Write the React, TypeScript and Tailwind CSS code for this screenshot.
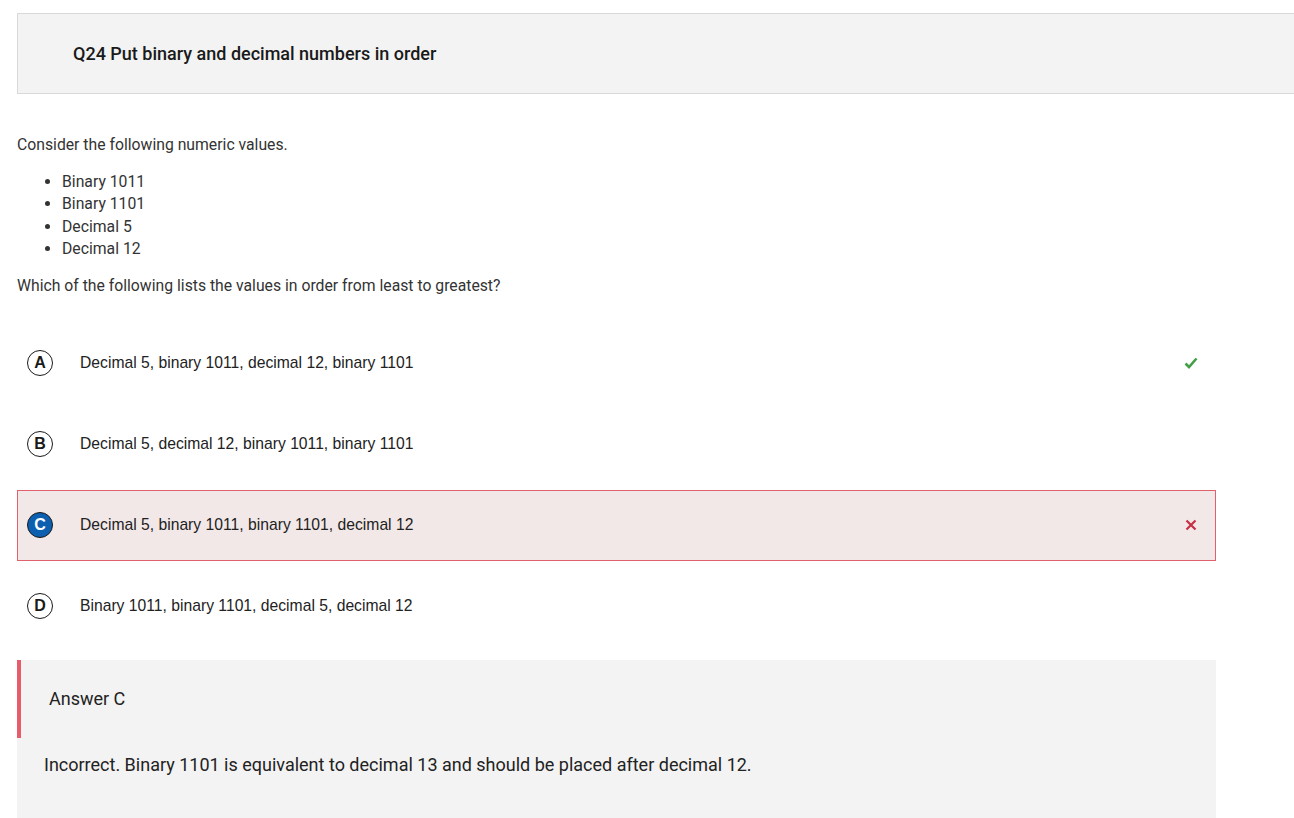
import React from "react";

const roboto = { fontFamily: "Roboto, 'Liberation Sans', sans-serif" };

function Letter({ l, selected }: { l: string; selected?: boolean }) {
  return (
    <div
      className={
        "w-[26px] h-[26px] rounded-full flex items-center justify-center text-[16px] font-bold shrink-0 " +
        (selected
          ? "bg-[#0d5fb0] border-[1.5px] border-[#1a1a1a] text-white"
          : "bg-white border-[1.5px] border-[#1a1a1a] text-[#1a1a1a]")
      }
      style={{ fontFamily: "'Liberation Sans', Arial, sans-serif" }}
    >
      {l}
    </div>
  );
}

function Check() {
  return (
    <svg width="14" height="12" viewBox="0 0 14 12">
      <path d="M1.5 6.5 L5 10 L12.5 1.5" fill="none" stroke="#43a047" strokeWidth="2.6" />
    </svg>
  );
}

function Cross() {
  return (
    <svg width="12" height="12" viewBox="0 0 12 12">
      <path d="M1.5 1.5 L10.5 10.5 M10.5 1.5 L1.5 10.5" fill="none" stroke="#c62f45" strokeWidth="2.2" />
    </svg>
  );
}

function Option({
  l,
  text,
  selected,
  mark,
}: {
  l: string;
  text: string;
  selected?: boolean;
  mark?: "check" | "cross";
}) {
  return (
    <div
      className={
        "h-[71px] flex items-center pl-[9px] pr-[16px] border " +
        (selected ? "bg-[#f3e8e8] border-[#e0606e]" : "border-transparent")
      }
    >
      <Letter l={l} selected={selected} />
      <div
        className="ml-[27px] flex-1 text-[15.7px] text-[#222]"
        style={{ fontFamily: "'Liberation Sans', Arial, sans-serif" }}
      >
        {text}
      </div>
      <div className="w-[14px] mr-[1px] flex justify-center">
        {mark === "check" && <Check />}
        {mark === "cross" && <Cross />}
      </div>
    </div>
  );
}

export default function App() {
  return (
    <div className="bg-white min-h-[818px] pt-[13px] pl-[17px] overflow-hidden" style={roboto}>
      <div className="h-[81px] bg-[#f3f3f3] border border-[#d9d9d9] border-r-0 flex items-center pl-[55px] -mr-[10px]">
        <h1 className="text-[18px] font-medium text-[#1a1a1a]">Q24 Put binary and decimal numbers in order</h1>
      </div>
      <div className="w-[1199px]">
        <div className="mt-[40px] text-[15.75px] leading-[22px] text-[#333]">
          <p>Consider the following numeric values.</p>
          <ul className="list-disc pl-[45px] mt-[15px]">
            <li className="leading-[22.4px]">Binary 1011</li>
            <li className="leading-[22.4px]">Binary 1101</li>
            <li className="leading-[22.4px]">Decimal 5</li>
            <li className="leading-[22.4px]">Decimal 12</li>
          </ul>
          <p className="mt-[14px]">Which of the following lists the values in order from least to greatest?</p>
        </div>
        <div className="mt-[31px] flex flex-col gap-[10px]">
          <Option l="A" text="Decimal 5, binary 1011, decimal 12, binary 1101" mark="check" />
          <Option l="B" text="Decimal 5, decimal 12, binary 1011, binary 1101" />
          <Option l="C" text="Decimal 5, binary 1011, binary 1101, decimal 12" selected mark="cross" />
          <Option l="D" text="Binary 1011, binary 1101, decimal 5, decimal 12" />
        </div>
        <div className="mt-[18px] bg-[#f3f3f3] pb-[40px]">
          <div className="h-[78px] border-l-4 border-[#e85b6a] flex items-center pl-[28px]">
            <span className="text-[18px] text-[#222]">Answer C</span>
          </div>
          <p className="pl-[27px] mt-[13px] text-[18px] text-[#222]">
            Incorrect. Binary 1101 is equivalent to decimal 13 and should be placed after decimal 12.
          </p>
        </div>
      </div>
    </div>
  );
}
